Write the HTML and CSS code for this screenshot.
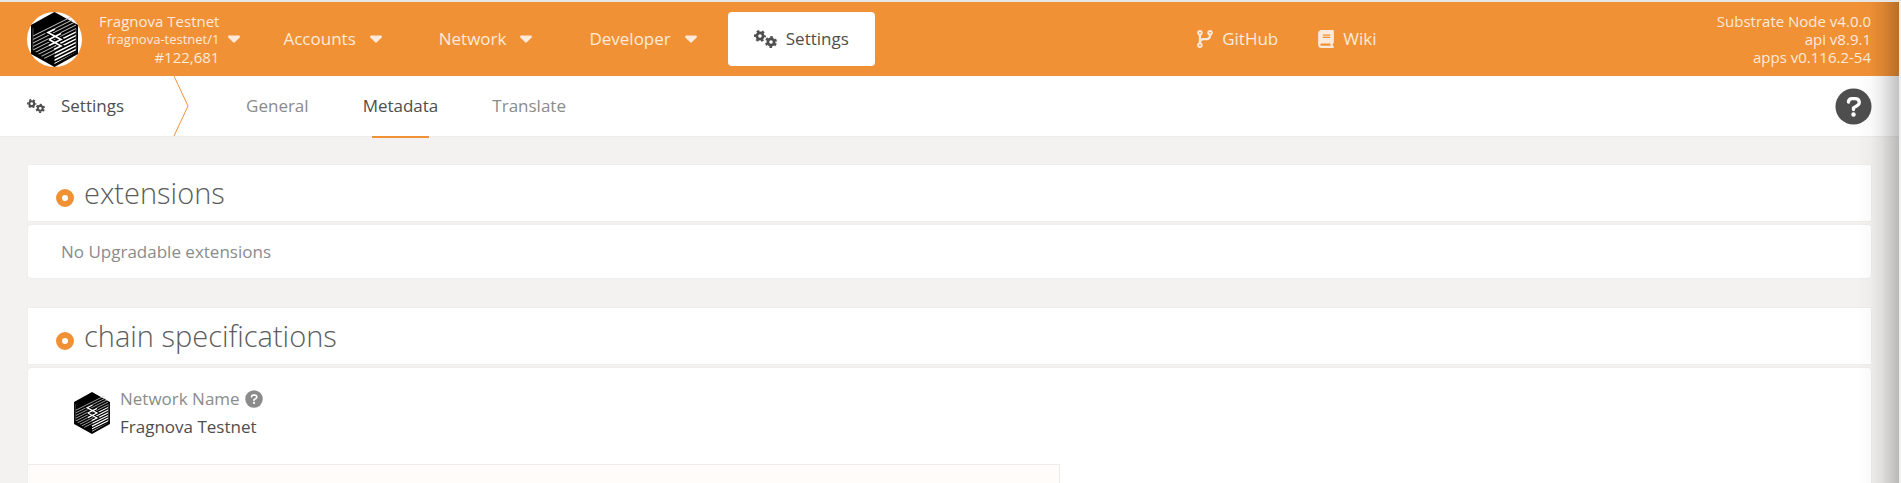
FILE: index.html
```html
<!DOCTYPE html>
<html lang="en">
<head>
<meta charset="utf-8">
<title>Settings</title>
<link rel="stylesheet" href="styles.css">
</head>
<body>
<svg class="defs" aria-hidden="true">
  <symbol id="caret" viewBox="0 180 320 210"><path d="M137.4 374.6c12.5 12.5 32.8 12.5 45.3 0l128-128c9.2-9.2 11.9-22.9 6.9-34.9s-16.6-19.8-29.6-19.8L32 192c-12.9 0-24.6 7.8-29.6 19.8s-2.2 25.7 6.9 34.9l128 128z"/></symbol>
  <symbol id="cogs" viewBox="0 0 46 36">
    <g fill="none" stroke="currentColor">
      <circle cx="12" cy="12" r="6.3" stroke-width="5.4"/>
      <circle cx="12" cy="12" r="10" stroke-width="4" stroke-dasharray="5.2 5.27" stroke-dashoffset="2.6"/>
      <circle cx="34" cy="24" r="6.3" stroke-width="5.4"/>
      <circle cx="34" cy="24" r="10" stroke-width="4" stroke-dasharray="5.2 5.27" stroke-dashoffset="7.8"/>
    </g>
  </symbol>
  <symbol id="branch" viewBox="0 0 448 512"><path d="M80 104a24 24 0 1 0 0-48 24 24 0 1 0 0 48zm80-24c0 32.8-19.7 61-48 73.3v87.8c18.8-10.9 40.7-17.1 64-17.1h96c35.3 0 64-28.7 64-64v-6.7C307.7 141 288 112.8 288 80c0-44.2 35.8-80 80-80s80 35.8 80 80c0 32.8-19.7 61-48 73.3V160c0 70.7-57.3 128-128 128H176c-35.3 0-64 28.7-64 64v6.7c28.3 12.3 48 40.5 48 73.3c0 44.2-35.8 80-80 80s-80-35.8-80-80c0-32.8 19.7-61 48-73.3V352 153.3C19.7 141 0 112.8 0 80C0 35.8 35.8 0 80 0s80 35.8 80 80zm232 0a24 24 0 1 0-48 0 24 24 0 1 0 48 0zM80 456a24 24 0 1 0 0-48 24 24 0 1 0 0 48z"/></symbol>
  <symbol id="book" viewBox="0 0 448 512"><path d="M96 0C43 0 0 43 0 96V416c0 53 43 96 96 96H384h32c17.7 0 32-14.3 32-32s-14.3-32-32-32V384c17.7 0 32-14.3 32-32V32c0-17.7-14.3-32-32-32H384 96zm0 384H352v64H96c-17.7 0-32-14.3-32-32s14.3-32 32-32zm32-240c0-8.8 7.2-16 16-16H336c8.8 0 16 7.2 16 16s-7.2 16-16 16H144c-8.8 0-16-7.2-16-16zm16 48H336c8.8 0 16 7.2 16 16s-7.2 16-16 16H144c-8.8 0-16-7.2-16-16s7.2-16 16-16z"/></symbol>
  <symbol id="help" viewBox="0 0 38 38">
    <circle cx="19" cy="19" r="18.5"/>
    <path d="M13.8 14.4c.2-2.2 1.700-3.500 3.800-3.500h3.200c4.600 0 5.400 5.300 2 7.200l-3.800 2.300v1.700" fill="none" stroke="#fff" stroke-width="3.400" stroke-linecap="round" stroke-linejoin="round"/>
    <circle cx="19" cy="27.300" r="2.300" fill="#fff"/>
  </symbol>
  <symbol id="hex" viewBox="4 0 47 55">
    <path d="M27.500 0 51 13v29L27.500 55 4 42V13z" fill="#000"/>
    <clipPath id="stripes"><path d="M6 16 11 19 43 4 49 13V40L27.500 52V44L18 47 6 38z"/></clipPath>
    <g clip-path="url(#stripes)" stroke="#fff" fill="none">
      <path stroke-width="1" stroke="#c8c8c8" d="M6 24 50 2M6 27.500 50 5.500M6 31 50 9M6 34.500 50 12.500M6 38 50 16M6 41.500 28 30.500M6 45 28 34M6 48.500 28 37.500M6 52 28 41"/>
      <path stroke-width="1.500" d="M28 30.500 50 19.500M28 34 50 23M28 37.500 50 26.500M28 41 50 30M27 45 50 33.500M27 48.500 50 37M27 52 50 40.500"/>
    </g>
    <path d="M6 16v22M49 16v22" stroke="#777" stroke-width=".6"/>
    <path d="M28 17 21 20.500 34 27.500 22 33.500M22 27.500 34 21.500M22 27.500 34 34 27 37.500" fill="none" stroke="#000" stroke-width="4"/>
    <path d="M28 17 21 20.500 34 27.500 22 33.500M22 27.500 34 21.500M22 27.500 34 34 27 37.500" fill="none" stroke="#fff" stroke-width="1.700"/>
  </symbol>
</svg>
<div class="app">
  <header class="topbar">
    <button class="chain" type="button">
      <span class="chain-logo"><svg class="hex-large"><use href="#hex"/></svg></span>
      <span class="chain-info">
        <span>Fragnova Testnet</span>
        <span class="chain-spec">fragnova-testnet/1</span>
        <span>#122,681</span>
      </span>
      <svg class="caret"><use href="#caret"/></svg>
    </button>
    <nav class="menu" aria-label="Main">
      <button class="menu-item" type="button">Accounts <svg class="caret"><use href="#caret"/></svg></button>
      <button class="menu-item" type="button">Network <svg class="caret"><use href="#caret"/></svg></button>
      <button class="menu-item" type="button">Developer <svg class="caret"><use href="#caret"/></svg></button>
      <a class="menu-item current" href="#settings"><svg class="cogs-large"><use href="#cogs"/></svg>Settings</a>
    </nav>
    <nav class="external" aria-label="External">
      <a href="#github"><svg class="link-icon"><use href="#branch"/></svg>GitHub</a>
      <a href="#wiki"><svg class="link-icon"><use href="#book"/></svg>Wiki</a>
    </nav>
    <div class="versions">
      <span>Substrate Node v4.0.0</span>
      <span>api v8.9.1</span>
      <span>apps v0.116.2-54</span>
    </div>
  </header>
  <div class="tabs">
    <div class="section-name"><svg class="cogs-small"><use href="#cogs"/></svg>Settings</div>
    <svg class="divider" viewBox="0 0 16 60" aria-hidden="true"><path d="M1 0 15 30 1 60"/></svg>
    <nav class="tab-list" aria-label="Settings">
      <a class="tab" href="#general">General</a>
      <a class="tab active" href="#metadata">Metadata</a>
      <a class="tab" href="#translate">Translate</a>
    </nav>
    <button class="help-button" type="button" aria-label="Help"><svg><use href="#help"/></svg></button>
  </div>
  <main class="content">
    <section class="panel">
      <h1 class="panel-title">extensions</h1>
      <p class="panel-body empty">No Upgradable extensions</p>
    </section>
    <section class="panel">
      <h1 class="panel-title">chain specifications</h1>
      <div class="panel-body">
        <div class="network">
          <svg class="hex-small"><use href="#hex"/></svg>
          <dl class="network-text">
            <dt>Network Name <svg class="help-small"><use href="#help"/></svg></dt>
            <dd>Fragnova Testnet</dd>
          </dl>
        </div>
        <div class="settings-box"></div>
      </div>
    </section>
  </main>
  <div class="edge-shadow"></div>
</div>
</body>
</html>
```
FILE: styles.css
```css
*, *::before { box-sizing: border-box; }
body {
  margin: 0;
  background: #f3f2f0;
  color: #4e4e4e;
  font: 400 17px/24px "Open Sans", "Noto Sans", sans-serif;
}
button { border: 0; padding: 0; background: none; color: inherit; font: inherit; }
a { color: inherit; text-decoration: none; }
svg { display: block; flex: none; fill: currentColor; }
.defs { position: absolute; width: 0; height: 0; }
.app {
  position: relative;
  height: 100vh;
  overflow: hidden;
  border-top: 2px solid #e6e6e6;
  border-right: 2px solid #f0f0f0;
}
.topbar {
  display: flex;
  align-items: center;
  height: 74px;
  padding: 0 28px 0 27px;
  background: #f19135;
  color: #fdeadb;
}
.chain { display: flex; align-items: center; }
.chain-logo {
  display: flex;
  justify-content: center;
  width: 55px;
  height: 55px;
  border-radius: 50%;
  background: #fff;
}
.hex-large { width: 47px; height: 55px; }
.chain-info, .versions {
  display: flex;
  flex-direction: column;
  text-align: right;
  font-size: 15px;
  line-height: 18px;
}
.chain-info { margin: 0 9px 0 17px; }
.chain-spec { font-size: 13px; }
.caret { width: 12px; height: 8px; }
.menu { display: flex; margin-left: 17px; }
.menu-item {
  display: flex;
  align-items: center;
  gap: 14px;
  height: 54px;
  padding: 0 31px 0 26px;
}
.menu-item.current {
  gap: 9px;
  padding: 0 26px;
  border-radius: 4px;
  background: #fff;
  color: #4e4e4e;
}
.cogs-large { width: 23px; height: 18px; }
.cogs-small { width: 18px; height: 14px; }
.external { display: flex; gap: 40px; margin: 0 auto; padding-right: 18px; }
.external a { display: flex; align-items: center; gap: 9px; }
.link-icon { width: 16px; height: 18px; }
.tabs {
  display: flex;
  align-items: center;
  height: 61px;
  padding: 0 27px;
  border-bottom: 1px solid #ececec;
  background: #fff;
}
.section-name { display: flex; align-items: center; gap: 16px; }
.divider { width: 16px; height: 60px; margin: 0 30px 0 49px; fill: none; stroke: #f19135; }
.tab-list { display: flex; align-self: stretch; }
.tab {
  position: relative;
  display: flex;
  align-items: center;
  padding: 0 27px;
  color: #8b8b8b;
}
.tab.active { color: #4e4e4e; }
.tab.active::after {
  content: "";
  position: absolute;
  right: 36px;
  bottom: -2px;
  left: 36px;
  height: 2px;
  background: #f19135;
}
.help-button { margin-left: auto; }
.help-button svg { width: 37px; height: 37px; }
.content { padding: 27px; }
.panel { margin-bottom: 28px; }
.panel-title, .panel-body { border: 1px solid #efeeed; background: #fff; }
.panel-title {
  display: flex;
  align-items: center;
  gap: 10px;
  height: 58px;
  margin: 0 0 2px;
  padding: 0 28px;
  color: #5c5c5c;
  font-size: 29px;
  font-weight: 300;
  line-height: 40px;
}
.panel-title::before {
  content: "";
  width: 18px;
  height: 18px;
  margin-top: 9px;
  border: 6px solid #f19135;
  border-radius: 50%;
}
.panel-body { margin: 0; border-radius: 4px; }
.empty { padding: 15px 33px 14px; color: #8b8b8b; }
.network { display: flex; align-items: center; gap: 10px; padding: 17px 46px 23px; }
.hex-small { width: 36px; height: 42px; }
.network-text { margin: 0; line-height: 28px; }
.network-text dt { display: flex; align-items: center; gap: 5px; color: #8b8b8b; }
.network-text dd { margin: 0; }
.help-small { width: 18px; height: 18px; }
.settings-box {
  width: 56%;
  min-height: 60px;
  border-top: 1px solid #ececec;
  border-right: 1px solid #ececec;
  background: #fffcf9;
}
.edge-shadow {
  position: absolute;
  top: 0;
  right: 0;
  bottom: 0;
  width: 44px;
  background: linear-gradient(to right, transparent, rgba(0, 0, 0, .02) 35%, rgba(0, 0, 0, .08) 60%, rgba(0, 0, 0, .24));
  pointer-events: none;
}
```
